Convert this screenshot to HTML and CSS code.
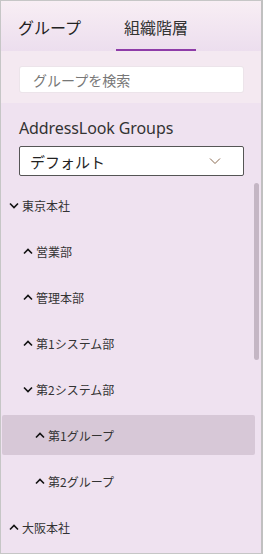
FILE: index.html
```html
<!DOCTYPE html>
<html lang="ja">
<head>
<meta charset="utf-8">
<link rel="stylesheet" href="styles.css">
</head>
<body>
<div class="app">
  <div class="tabs">
    <div class="tab">グループ</div>
    <div class="tab active">組織階層</div>
  </div>
  <div class="search-area">
    <div class="search">グループを検索</div>
  </div>
  <div class="groups">
    <div class="groups-title">AddressLook Groups</div>
    <div class="select">
      <span>デフォルト</span>
      <svg class="select-chev" width="12" height="8" viewBox="0 0 12 8"><path d="M1 1.5 L6 6.5 L11 1.5" fill="none" stroke="#8a6a50" stroke-width="1"/></svg>
    </div>
  </div>
  <div class="tree">
    <div class="row l0"><svg class="chev" viewBox="0 0 10 7"><path d="M1 1.5 L5 5.5 L9 1.5" fill="none" stroke="#111" stroke-width="1.6"/></svg><span>東京本社</span></div>
    <div class="row l1"><svg class="chev" viewBox="0 0 10 7"><path d="M1 5.5 L5 1.5 L9 5.5" fill="none" stroke="#111" stroke-width="1.6"/></svg><span>営業部</span></div>
    <div class="row l1"><svg class="chev" viewBox="0 0 10 7"><path d="M1 5.5 L5 1.5 L9 5.5" fill="none" stroke="#111" stroke-width="1.6"/></svg><span>管理本部</span></div>
    <div class="row l1"><svg class="chev" viewBox="0 0 10 7"><path d="M1 5.5 L5 1.5 L9 5.5" fill="none" stroke="#111" stroke-width="1.6"/></svg><span>第1システム部</span></div>
    <div class="row l1"><svg class="chev" viewBox="0 0 10 7"><path d="M1 1.5 L5 5.5 L9 1.5" fill="none" stroke="#111" stroke-width="1.6"/></svg><span>第2システム部</span></div>
    <div class="row l2 selected"><svg class="chev" viewBox="0 0 10 7"><path d="M1 5.5 L5 1.5 L9 5.5" fill="none" stroke="#111" stroke-width="1.6"/></svg><span>第1グループ</span></div>
    <div class="row l2"><svg class="chev" viewBox="0 0 10 7"><path d="M1 5.5 L5 1.5 L9 5.5" fill="none" stroke="#111" stroke-width="1.6"/></svg><span>第2グループ</span></div>
    <div class="row l0"><svg class="chev" viewBox="0 0 10 7"><path d="M1 5.5 L5 1.5 L9 5.5" fill="none" stroke="#111" stroke-width="1.6"/></svg><span>大阪本社</span></div>
    <div class="scrollbar"></div>
  </div>
</div>
</body>
</html>
```

FILE: styles.css
```css
* { box-sizing: border-box; }
html, body { margin: 0; padding: 0; }
body {
  font-family: "Noto Sans", "Noto Sans CJK JP", sans-serif;
  color: #333;
  width: 263px;
  height: 554px;
  overflow: hidden;
}
.app {
  width: 263px;
  height: 554px;
  border-top: 1px solid #c6c6c6;
  border-left: 1px solid #c6c6c6;
  border-right: 2px solid #c0c0c0;
  border-bottom: 1px solid #c6c6c6;
  background: #efe2f0;
  display: flex;
  flex-direction: column;
  overflow: hidden;
}
.tabs {
  height: 50px;
  background: linear-gradient(#f8eef4, #ecdeee);
  display: flex;
  align-items: stretch;
  padding-left: 9px;
}
.tab {
  font-family: "Noto Sans CJK JP", sans-serif;
  font-size: 16px;
  color: #222;
  padding: 4px 8px 0 8px;
  display: flex;
  align-items: center;
  border-bottom: 2px solid transparent;
}
.tab + .tab { margin-left: 27px; }
.tab.active {
  border-bottom-color: #8e3ca8;
  color: #333;
  width: 80px;
}
.search-area {
  height: 52px;
  background: #f4e9f1;
  padding: 16px 18px 0 19px;
}
.search {
  height: 25px;
  width: 223px;
  background: #fff;
  border-radius: 2px;
  box-shadow: 0 0 0 1px #ece4ea;
  font-family: "Noto Sans CJK JP", sans-serif;
  font-size: 14px;
  color: #777;
  padding-left: 13px;
  display: flex;
  align-items: center;
}
.groups {
  padding: 14px 18px 0 18px;
}
.groups-title {
  font-size: 16px;
  line-height: 22px;
  color: #333;
  letter-spacing: -0.1px;
}
.select {
  margin-top: 7px;
  width: 225px;
  height: 30px;
  background: #fff;
  border: 1px solid #555;
  border-radius: 2px;
  display: flex;
  align-items: center;
  justify-content: space-between;
  padding: 0 22px 0 10px;
  font-family: "Noto Sans CJK JP", sans-serif;
  font-size: 15px;
  color: #222;
}
.select-chev { display: block; }
.tree {
  position: relative;
  flex: 1;
  padding-top: 9px;
  display: flex;
  flex-direction: column;
  gap: 6px;
}
.row {
  height: 40px;
  margin: 0 6px 0 1px;
  display: flex;
  align-items: center;
  font-family: "Noto Sans CJK JP", sans-serif;
  font-size: 12px;
  color: #333;
  border-radius: 2px;
}
.row .chev { width: 10px; height: 7px; margin-right: 3px; }
.row.l0 { padding-left: 7px; }
.row.l1 { padding-left: 21px; }
.row.l2 { padding-left: 33px; }
.row.selected { background: #d7c8d7; }
.scrollbar {
  position: absolute;
  right: 2px;
  top: 7px;
  width: 5px;
  height: 177px;
  border-radius: 3px;
  background: #c4b6c4;
}
```
